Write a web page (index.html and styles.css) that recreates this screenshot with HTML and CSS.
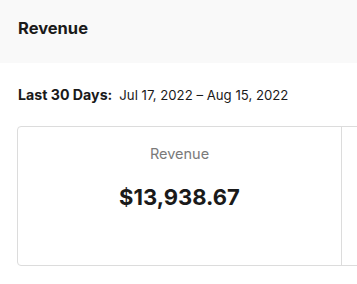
FILE: index.html
```html
<!DOCTYPE html>
<html lang="en">

<head>
    <meta charset="UTF-8">
    <title>Revenue</title>
    <link rel="stylesheet" href="styles.css">
</head>

<body>
    <header class="topbar">
        <h1>Revenue</h1>
    </header>

    <main class="content">
        <p class="range"><strong>Last 30 Days:</strong> <span>Jul 17, 2022 – Aug 15, 2022</span></p>

        <section class="stats">
            <article class="stat">
                <p class="label">Revenue</p>
                <p class="value">$13,938.67</p>
            </article>
            <article class="stat"></article>
        </section>
    </main>
</body></html>
```

FILE: styles.css
```css
body {
    margin: 0;
    font-family: Inter, "Noto Sans", sans-serif;
    color: #1a1a1a;
    background: #fff;
    overflow: hidden;
}

.topbar {
    height: 63px;
    background-color: #f9f9f9;
    padding: 0 18px;
    box-sizing: border-box;
    padding-top: 18px;
}

h1 {
    margin: 0;
    font-size: 16.5px;
    line-height: 20px;
    font-weight: 700;
}

.content {
    padding: 0 18px;
}

.range {
    margin: 22px 0 0;
    font-size: 14.2px;
    line-height: 20px;
}

.range strong {
    font-weight: 700;
    margin-right: 3px;
}

.range span {
    font-size: 13.2px;
}

.stats {
    margin: 21px 0 0 -1px;
    width: 700px;
    height: 140px;
    box-sizing: border-box;
    display: flex;
    border: 1px solid #dcdcdc;
    border-radius: 4px;
}

.stat {
    width: 323px;
    flex: none;
    text-align: center;
    border-right: 1px solid #dcdcdc;
}

.label {
    margin: 17px 0 0;
    font-size: 14.5px;
    line-height: 20px;
    color: #7a7a7a;
}

.value {
    margin: 19px 0 0;
    font-size: 22px;
    line-height: 28px;
    font-weight: 700;
}
```
